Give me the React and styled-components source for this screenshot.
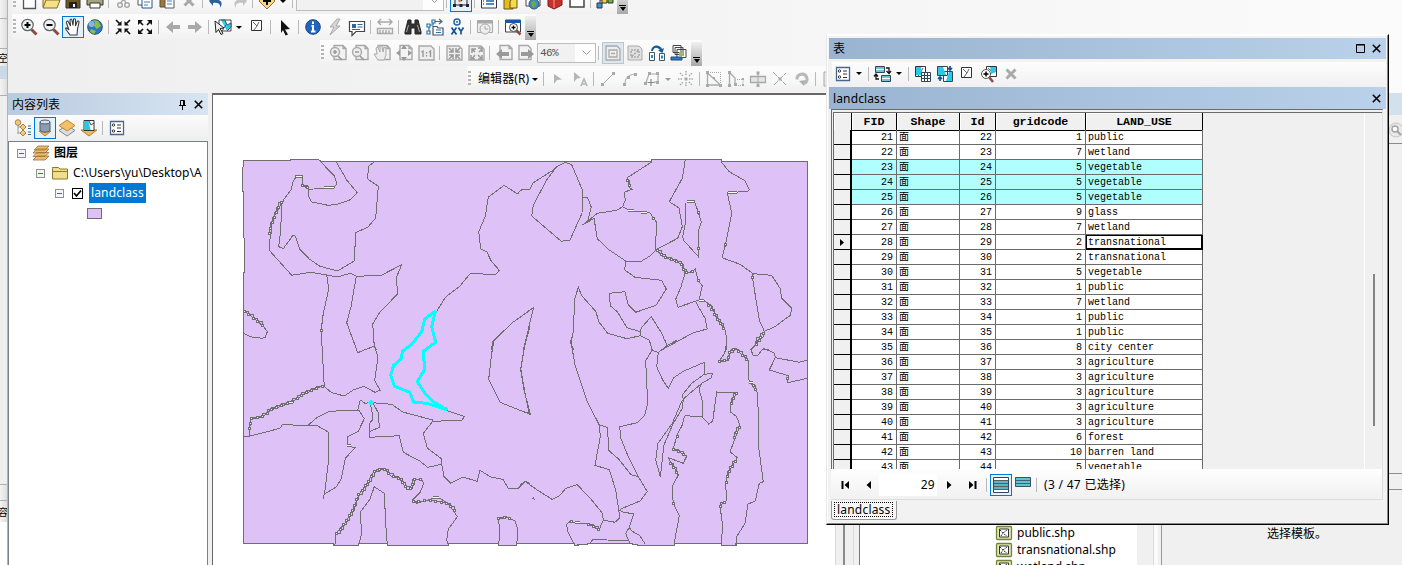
import React from "react";
import styled, { createGlobalStyle, css } from "styled-components";

const UI = `"Noto Sans", "Noto Sans CJK SC", sans-serif`;
const CELL = `"Liberation Mono", "Noto Sans CJK SC", monospace`;

const Global = createGlobalStyle`
  * { box-sizing: border-box; }
  body { margin: 0; background: #f0f0f0; overflow: hidden; }
`;

/* ---------- shell ---------- */
const Desktop = styled.div`
  position: relative;
  display: flex;
  width: 1402px;
  height: 565px;
  overflow: hidden;
  background: #f0f0f0;
  color: #000;
  font: 12px/16px ${UI};
`;
const EdgeStrip = styled.div`
  display: flex;
  flex-direction: column;
  width: 8px;
  flex: none;
  border-right: 1px solid #b4b4b4;
  background: linear-gradient(90deg, #f4f4f4, #dedede);
  overflow: hidden;
`;
const EdgeBlock = styled.div`
  flex: none;
  height: ${(p) => p.$h}px;
  background: ${(p) => p.$bg || "transparent"};
  border-top: ${(p) => (p.$line ? "1px solid #b0b0b0" : "0")};
  font-size: 10px;
  line-height: ${(p) => p.$h}px;
  text-indent: -2px;
  white-space: nowrap;
  overflow: hidden;
`;
const Workspace = styled.div`
  flex: 1;
  min-width: 0;
  display: flex;
  flex-direction: column;
`;
const ToolbarStack = styled.div`
  flex: none;
  height: 93px;
  padding-bottom: 1px;
  overflow: hidden;
  display: flex;
  flex-direction: column;
  justify-content: flex-end;
  background: linear-gradient(90deg, #efefef, #f3f3f3 40%, #fbfbfb);
`;
const Toolbar = styled.div`
  flex: none;
  display: flex;
  align-items: center;
  width: max-content;
  height: 26px;
  margin-left: ${(p) => p.$left}px;
  background: linear-gradient(#fcfcfc, #f8f8f8 55%, #f0f0f0);
`;
const Grip = styled.i`
  width: 3px;
  height: 16px;
  margin: 0 ${(p) => p.$after ?? 2}px 0 1px;
  background: repeating-linear-gradient(#b5b5b5 0 2px, transparent 2px 4px);
`;
const Slot = styled.span`
  flex: none;
  display: flex;
  align-items: center;
  justify-content: center;
  width: 22px;
  height: 22px;
  ${(p) => p.$on && css`border: 1px solid ${p.$soft ? "#bcc5cc" : "#0078d7"}; background: ${p.$soft ? "#dde7f0" : "#e5f0fa"};`}
`;
const Divider = styled.i`
  flex: none;
  width: 1px;
  height: 14px;
  margin: 0 ${(p) => p.$r ?? 3}px 0 ${(p) => p.$l ?? 2}px;
  background: #b9b9b9;
`;
const Caret = styled.i`
  flex: none;
  width: 0;
  border: 3px solid transparent;
  border-top-color: ${(p) => (p.$dim ? "#999" : "#000")};
  border-bottom: 0;
  margin: 0 ${(p) => p.$r ?? 4}px 0 ${(p) => p.$l ?? 2}px;
`;
const Overflow = styled.span`
  align-self: flex-end;
  display: flex;
  flex-direction: column;
  align-items: center;
  justify-content: flex-end;
  gap: 1px;
  width: 11px;
  height: 24px;
  margin-left: 1px;
  padding-bottom: 3px;
  background: linear-gradient(#f0f0f0, #a8a8a8);
  &::before { content: ""; width: 7px; height: 1px; background: #000; }
  &::after { content: ""; border: 3px solid transparent; border-top: 4px solid #000; border-bottom: 0; }
`;
const Combo = styled.span`
  display: flex;
  align-items: center;
  justify-content: space-between;
  width: ${(p) => p.$w}px;
  height: 20px;
  padding: 0 4px 0 2px;
  border: 1px solid #bdbdbd;
  background: linear-gradient(90deg, #f1f1f1 calc(100% - 20px), #fdfdfd 0);
  color: #555;
  font: 11px ${CELL};
  letter-spacing: -0.6px;
`;
const MenuLabel = styled.span`
  width: 54px;
  white-space: nowrap;
  font-size: 12px;
  letter-spacing: 0.1px;
`;

/* ---------- contents panel ---------- */
const Body = styled.div`
  flex: 1;
  min-height: 0;
  display: flex;
`;
const Contents = styled.aside`
  width: 200px;
  flex: none;
  margin-right: 4px;
  display: flex;
  flex-direction: column;
`;
const PanelHead = styled.div`
  flex: none;
  height: 22px;
  display: flex;
  align-items: center;
  padding: 1px 5px 0 4px;
  gap: 8px;
  background: linear-gradient(90deg, #b9cbdf, #d7e4f2);
  font-size: 12px;
`;
const Fill = styled.span`flex: 1;`;
const PanelTools = styled.div`
  flex: none;
  display: flex;
  align-items: center;
  height: 26px;
  padding-left: 4px;
  background: linear-gradient(#fbfbfb, #eee);
`;
const Tree = styled.div`
  flex: 1;
  border: 1px solid #7b7f86;
  border-bottom: 0;
  background: #fff;
  padding-top: 1px;
  overflow: hidden;
`;
const TreeRow = styled.div`
  display: flex;
  align-items: center;
  height: 20px;
  padding-left: ${(p) => p.$indent}px;
  white-space: nowrap;
  font-weight: ${(p) => (p.$strong ? 600 : 400)};
  overflow: hidden;
`;
const Toggle = styled.i`
  flex: none;
  width: 9px;
  height: 9px;
  border: 1px solid #919191;
  background: linear-gradient(#4464a5, #4464a5) center / 5px 1px no-repeat #f4f4f4;
  margin-right: ${(p) => p.$r}px;
`;
const Check = styled.span`
  display: flex;
  width: 11px;
  height: 11px;
  border: 1px solid #000;
  margin-right: 6px;
`;
const Picked = styled.span`
  height: 20px;
  padding: 2px 2px 0;
  background: #0078d7;
  color: #fff;
  letter-spacing: 0.13px;
`;
const Swatch = styled.i`
  width: 15px;
  height: 11px;
  background: #dec1f7;
  border: 1px solid #6e6e6e;
`;

/* ---------- map & docks ---------- */
const MapPane = styled.main`
  flex: none;
  width: 623px;
  border-top: 2px solid #6b6769;
  border-left: 1px solid #6b6769;
  background: #fff;
  svg { display: block; }
`;
const FileDock = styled.div`
  flex: none;
  width: 327px;
  display: flex;
  background: #f0f0f0;
`;
const Rail = styled.i`
  width: ${(p) => p.$w}px;
  background: ${(p) => p.$bg};
`;
const FileList = styled.div`
  flex: none;
  width: 277px;
  background: #fff;
  padding: 431px 0 0 134px;
  overflow: hidden;
`;
const FileRow = styled.div`
  display: flex;
  align-items: center;
  gap: 3px;
  height: 17px;
  font-size: 12px;
`;
const TemplateDock = styled.div`
  flex: 1;
  display: flex;
  flex-direction: column;
`;
const DockHead = styled.div`height: 22px; background: #d3e0ed;`;
const DockSearch = styled.div`
  height: 29px;
  border-bottom: 1px solid #8a8a8a;
  display: flex;
  justify-content: flex-end;
  align-items: center;
  padding-top: 1px;
  svg { margin-right: -4px; }
`;
const DockBody = styled.div`height: 329px;`;
const DockBar = styled.div`
  height: 17px;
  border: 1px solid #8c8c96;
  border-width: 1px 0;
`;
const DockText = styled.div`padding: 36px 0 0 105px;`;

/* ---------- table window ---------- */
const TableWindow = styled.section`
  position: absolute;
  left: 826px;
  top: 34px;
  width: 563px;
  height: 491px;
  display: flex;
  flex-direction: column;
  padding: 3px 2px 0 2px;
  border: 1px solid #fff;
  border-right: 1px solid #000;
  border-bottom: 1px solid #000;
  border-left-color: #e8e8e8;
  background: #f2f2f2;
  box-shadow: inset -1px -1px 0 #8a8a8a, inset 1px 1px 0 #fff;
`;
const TitleBar = styled.div`
  flex: none;
  display: flex;
  align-items: center;
  gap: 7px;
  height: ${(p) => p.$h}px;
  padding: ${(p) => p.$drop || 0}px 5px 0 4px;
  background: linear-gradient(90deg, #99b4d1, #b9d1ea);
  letter-spacing: 0.13px;
`;
const TableTools = styled.div`
  flex: none;
  display: flex;
  align-items: center;
  height: 25px;
  margin: 3px 0 0 3px;
  padding-bottom: 2px;
  background: linear-gradient(#fdfdfd, #f0f0f0);
`;
const Frame = styled.div`
  flex: none;
  display: flex;
  height: 360px;
  margin: 0 3px 0 2px;
  border: 3px double #6b6b6b;
  border-width: 4px 1px 0 3px;
  border-right: 1px solid #e3e3e3;
  background: #f0f0f0;
  overflow: hidden;
`;
const Sheet = styled.div`
  flex: none;
  width: 369px;
  overflow: hidden;
`;
const SheetRow = styled.div`
  display: grid;
  grid-template-columns: 18px 45px 63px 36px 90px 117px;
  height: ${(p) => (p.$head ? 17 : 15)}px;
  background: ${(p) => (p.$sel ? "#afffff" : "#fff")};
`;
const Head = styled.div`
  background: #f0f0f0;
  border: solid #000;
  border-width: 0 1px 1px 0;
  box-shadow: inset 1px 1px #fff;
  text-align: center;
  font: bold 11.6px/17px ${CELL};
`;
const RowHead = styled.div`
  display: flex;
  align-items: center;
  justify-content: center;
  background: #f0f0f0;
  border: solid #000;
  border-width: 0 2px 1px 0;
`;
const Cell = styled.div`
  border: solid #6b6b6b;
  border-width: 0 1px 1px 0;
  padding: 1px ${(p) => (p.$right ? 3 : 2)}px 0;
  text-align: ${(p) => (p.$right ? "right" : "left")};
  font: 10px/14px ${CELL};
  white-space: nowrap;
  overflow: hidden;
  ${(p) => p.$active && css`box-shadow: inset 0 0 0 1px #000; border-color: #000;`}
`;
const ScrollTrack = styled.div`
  width: 18px;
  margin-left: auto;
  padding: 161px 0 0 8px;
  border-left: 1px solid #fff;
`;
const ScrollThumb = styled.div`width: 2px; height: 152px; background: #858585;`;
const Navigator = styled.div`
  flex: none;
  display: flex;
  align-items: center;
  height: 31px;
  margin: 0 3px 0 2px;
  padding: 1px 0 0 4px;
  border-right: 1px solid #ddd;
  border-bottom: 1px solid #ddd;
  background: linear-gradient(#fefefe, #f1f1f1);
`;
const RecordBox = styled.span`
  width: 58px;
  height: 22px;
  margin: 0 2px 0 0;
  padding: 3px 2px 0 0;
  background: #fff;
  text-align: right;
  letter-spacing: 0.3px;
`;
const SelectionNote = styled.span`
  margin-left: 4px;
  letter-spacing: 0.3px;
  white-space: pre;
`;
const SheetTab = styled.div`
  flex: none;
  width: 66px;
  height: 19px;
  margin: 1px 0 0 2px;
  padding: 1px 3px 2px 2px;
  border: 1px solid #999;
  border-top: 0;
  border-radius: 0 0 3px 3px;
  background: #f7f7f7;
  span { display: block; height: 15px; border: 1px dotted #000; line-height: 13px; padding-left: 2px; letter-spacing: 0.2px; }
`;

/* ---------- icons ---------- */
const G = "#a9a9a9";
const page = (c = G, f = "#f3f3f3") => <path d="M6 2.5h9l3 3v11H6z M15 2.5v3h3" fill={f} stroke={c} strokeWidth="1.4" />;
const clip = (x = 3, y = 2) => (
  <g transform={`translate(${x} ${y})`}>
    <path d="M.5.5h10v10H.5z" fill="#fff" stroke="#333" />
    <path d="M2 2l4 4-3 4M6 6l2-4" fill="none" stroke="#666" />
  </g>
);
const art = {
  new: <path d="M4.500 1.500h12v16h-12z" fill="#fdfdff" stroke="#555" strokeWidth="1.300" />,
  open: <path d="M2 17l3-8h14l-3 8zM2 16V5h5l2 2h7v2" fill="#f7e08a" stroke="#806b1c" />,
  save: <g><path d="M3 3h14v14H3z" fill="#6b5a1e" stroke="#333" /><path d="M6 11h8v6H6z" fill="#222" /><path d="M10 13h2v3h-2z" fill="#fff" /></g>,
  print: <g><path d="M2 6h16v8H2z" fill="#a8a480" stroke="#333" /><path d="M5 12h10v5H5z" fill="#fff" stroke="#333" /></g>,
  cut: <g fill="none" stroke={G} strokeWidth="1.500"><circle cx="7" cy="14" r="2.300" /><circle cx="14" cy="14" r="2.300" /><path d="M8 12l5-9M13 12L8 3" /></g>,
  copy: <g><path d="M3 2h9v12H3z" fill="#fff" stroke="#555" /><path d="M7 5h10v12H7z" fill="#fff" stroke="#1d5a8c" /><path d="M9 8h6M9 11h6M9 14h4" stroke="#3f7eb4" /></g>,
  paste: <g><path d="M3 2h11v14H3z" fill="#a5743a" stroke="#553" /><path d="M8 6h9v11H8z" fill="#fff" stroke="#555" /><path d="M10 10h5M10 13h5" stroke="#3f7eb4" /></g>,
  del: <path d="M5.500 5.500l9 9M14.500 5.500l-9 9" stroke={G} strokeWidth="3" />,
  undo: <path d="M2 10l4-5v3c7 0 11 3 7 9 1-4-2-6-7-5v3z" fill="#2c5f9a" />,
  redo: <path d="M18 10l-4-5v3c-7 0-11 3-7 9-1-4 2-6 7-5v3z" fill="#c4c4c4" />,
  add: <g><path d="M10 2l8 8-8 8-8-8z" fill="#f8d684" stroke="#9a7332" /><path d="M10 6v8M6 10h8" stroke="#000" strokeWidth="2" /></g>,
  sketch: <g><path d="M3 14h14M4 14V7l6 3 6-5v9" fill="none" stroke="#222" /><path d="M2 13h3v3H2zM15 13h3v3h-3zM8.500 13h3v3h-3z" fill="#222" /><path d="M8 11l4-7" stroke="#d0803a" strokeWidth="2" /></g>,
  table: <g><path d="M2.500 3h15v14h-15z" fill="#fff" stroke="#334" /><path d="M2 3h16v3H2z" fill="#1f62ac" /><path d="M4 10h1M7 10h8M4 13h1M7 13h8" stroke="#1f62ac" strokeWidth="1.500" /></g>,
  catalog: <g><path d="M3 4h9v14H3z" fill="#e5bc20" stroke="#665510" /><path d="M9 10l7-6v13H9z" fill="#f6da4a" stroke="#665510" /></g>,
  globewin: <g><path d="M3 2h14v13H3z" fill="#fff" stroke="#444" /><circle cx="11" cy="13" r="5" fill="#3e8dc4" stroke="#2c5274" /><path d="M8 11l4-1 1 4-3 3z" fill="#74ac3c" /></g>,
  toolbox: <g><path d="M3 6l8-3 6 3v8l-8 4-6-3z" fill="#c8322a" stroke="#801812" /><path d="M3 7l6 2v8M9 9l8-3" fill="none" stroke="#f19a92" /></g>,
  python: <path d="M3 3h14v13H3z" fill="#fff" stroke="#444" strokeWidth="1.500" />,
  model: <g stroke="#333"><path d="M5 14V9h5" fill="none" /><path d="M2 12h5v5H2z" fill="#3f90d6" /><path d="M7 7h5v5H7z" fill="#f3d04a" /><path d="M13 7h5v5h-5z" fill="#71b344" /></g>,
  zoomin: <g><path d="M12.500 12.500l5 5" stroke="#8e4a42" strokeWidth="3" /><circle cx="8.500" cy="8" r="5.700" fill="#f0f2f2" stroke="#5d6668" strokeWidth="1.200" /><path d="M5.500 8h6M8.500 5v6" stroke="#000" strokeWidth="2" /></g>,
  zoomout: <g><path d="M12.500 12.500l5 5" stroke="#8e4a42" strokeWidth="3" /><circle cx="8.500" cy="8" r="5.700" fill="#f0f2f2" stroke="#5d6668" strokeWidth="1.200" /><path d="M5.500 8h6" stroke="#000" strokeWidth="2" /></g>,
  hand: <path d="M7 18L3 12.500c-1-2 .5-2.500 3 .5L3.500 6C3 4 5 3.500 5.500 5l2 4L7 3.500c0-2 2-2 2 0l1 5 .5-5.500c0-2 2-1.500 2 0v6l1.500-4c.6-1.700 2.400-1 2 .5L14.500 12l-.5 6z" fill="#fff" stroke="#3c3c3c" strokeWidth="1.100" />,
  globe: <g><circle cx="10" cy="10" r="7.300" fill="#2f78bd" stroke="#2c5274" /><path d="M8 3l5 1 3 5-4 3-3-3 1-3z M6 12l5 2-2 3-4-2z" fill="#8cbf45" /><circle cx="6.500" cy="7" r="3" fill="#a9d2ef" opacity=".7" /></g>,
  inward: <g stroke="#111" strokeWidth="1.700" fill="#111"><path d="M3 3l4 4M17 3l-4 4M3 17l4-4M17 17l-4-4" /><path d="M8.500 4v4.500H4zM11.500 4v4.500H16zM8.500 16v-4.500H4zM11.500 16v-4.500H16z" stroke="none" /></g>,
  outward: <g stroke="#111" strokeWidth="1.700"><path d="M5 5l3 3M15 5l-3 3M5 15l3-3M15 15l-3-3" /><path d="M3 3h5L3 8zM17 3v5l-5-5zM3 17v-5l5 5zM17 17h-5l5-5z" fill="#111" stroke="none" /></g>,
  back: <path d="M3 10l7-6v4h7v4h-7v4z" fill={G} />,
  fwd: <path d="M17 10l-7-6v4H3v4h7v4z" fill={G} />,
  select: <g><path d="M6 3h12v11H6z" fill="#fff" stroke="#444" /><path d="M8 3h4l2 5 4-2v4l-4 4M9 14l4-6" fill="#29cbe6" stroke="#456" /><path d="M2 4l9 7-4 .5 3 5-2 1-2.500-5-2.500 3z" fill="#eee" stroke="#222" /></g>,
  clear: clip(4, 3),
  pointer: <path d="M6 3l9 9-5 .5 3 5-2.500 1L8 13l-2 3z" fill="#111" />,
  info: <g><circle cx="10" cy="10" r="7.300" fill="#2265bd" stroke="#174382" /><path d="M10 4.500v2.500M8.500 9H10v5.500M8 14.500h4.500" stroke="#fff" strokeWidth="2" fill="none" /></g>,
  bolt: <path d="M12 2L5 10h4l-4 8 10-9h-4l4-7z" fill="#d5d5d5" stroke="#aaa" />,
  popup: <g><path d="M2.500 4.500h15v10H9l-4 4v-4H2.500z" fill="#fff" stroke="#444" strokeWidth="1.200" /><path d="M5 7h4v4H5z" fill="#2c67a4" /><path d="M10.500 7.500h5M10.500 10h5M5 12.500h8" stroke="#2c67a4" /></g>,
  measure: <g fill="none" stroke={G} strokeWidth="1.400"><path d="M3 5h14M6 2L3 5l3 3M14 2l3 3-3 3M2.500 11.500h15v5h-15z M5 13v3M8 13v3M11 13v3M14 13v3" /></g>,
  find: <g fill="#333" stroke="#222"><path d="M5 3h3v4h4V3h3l3 12v2h-6v-6H8v6H2v-2z" /><path d="M5.500 8l-2 7M14.500 8l2 7" stroke="#aaa" /></g>,
  route: <g fill="none" stroke="#2673ad" strokeWidth="1.200"><path d="M4 15V8h4V4.500h8M14 2l3 2.500L14 7" /><path d="M2 14h3v3H2zM2 7h3v3H2zM7 3h3v3H7z" fill="#fff" /><path d="M8 9.500h4l1 1.500h5v7H8z" fill="#fff" stroke="#456" /><path d="M11 13h5M11 15.500h5" /></g>,
  xy: <g><circle cx="10" cy="5" r="3" fill="#fff" stroke="#2165a4" strokeWidth="1.500" /><circle cx="10" cy="5" r="1" fill="#2165a4" /><path d="M4.500 10.500l5 7M9.500 10.500l-5 7M11.500 10.500l2.500 4 2.500-4M14 14v3.500" stroke="#175590" strokeWidth="1.700" fill="none" /></g>,
  clock: <g stroke={G} fill="#eee"><path d="M2.500 3.500h15v12h-15z" /><path d="M2.500 5h15" strokeWidth="3" /><circle cx="10" cy="12" r="5" /><path d="M10 9v3h3" fill="none" /></g>,
  viewer: <g><path d="M2.500 3h15v12h-15z" fill="#fff" stroke="#345" /><path d="M2 3h16v3H2z" fill="#1859a5" /><path d="M13 13l4.500 4.500" stroke="#8e4a42" strokeWidth="2.500" /><circle cx="10.500" cy="10.500" r="4" fill="#fff" stroke="#444" /><path d="M8.500 10.500h4M10.500 8.500v4" stroke="#000" strokeWidth="1.300" /></g>,
  pzin: <g>{page()}<circle cx="7" cy="9" r="4.500" fill="#eee" stroke={G} strokeWidth="1.400" /><path d="M5 9h4M7 7v4M10 13l4 4" stroke="#999" strokeWidth="1.600" /></g>,
  pzout: <g>{page()}<circle cx="7" cy="9" r="4.500" fill="#eee" stroke={G} strokeWidth="1.400" /><path d="M5 9h4M10 13l4 4" stroke="#999" strokeWidth="1.600" /></g>,
  phand: <g>{page()}<path d="M6 17l-4-6 3 0-1-6 2-1 2 5V3h2l1 6 1-5 2 1v7l-2 5z" fill="#eee" stroke={G} /></g>,
  pfull: <g>{page()}<path d="M10 2l3 4H7zM10 18l3-4H7zM2 10l4-3v6zM18 10l-4-3v6z" fill="#999" /></g>,
  pone: <g><path d="M3 3h12l3 3v11H3z" fill="#eee" stroke={G} strokeWidth="1.400" /><path d="M5.500 9l1.500-1v6M13 9l1.500-1v6M10.500 9v1.500M10.500 12v1.500" fill="none" stroke="#999" strokeWidth="1.400" /></g>,
  pin: <g><path d="M3 3h12l3 3v11H3z" fill="#eee" stroke={G} strokeWidth="1.400" /><path d="M9 9L5 5M9 5v4H5M12 9l4-4M12 5v4h4M9 12l-4 4M5 12h4v4M12 12l4 4M16 12h-4v4" stroke="#999" strokeWidth="1.500" fill="none" /></g>,
  pout: <g><path d="M3 3h12l3 3v11H3z" fill="#eee" stroke={G} strokeWidth="1.400" /><path d="M9 9L6 6M10 6H6v4M13 9l3-3M12 5h4v4M9 12l-3 4M5 12v4h4M12 12l4 4M16 12v4h-4" stroke="#999" strokeWidth="1.500" fill="none" /></g>,
  pback: <g>{page()}<path d="M2 11l6-5v3h7v4H8v3z" fill="#999" /></g>,
  pfwd: <g><path d="M3 2.500h9l3 3v11H3z" fill="#f3f3f3" stroke={G} strokeWidth="1.400" /><path d="M18 11l-6-5v3H5v4h7v3z" fill="#999" /></g>,
  draft: <g fill="#eee" stroke={G} strokeWidth="1.300"><path d="M3 3h11l3 3v11H3z" /><path d="M6 7h8v7H6zM8 10.500h4" /></g>,
  focus: <g fill="#e2e2e2" stroke={G}><path d="M3 3h11l3 3v11H3z" /><path d="M6 7h8v7H6zM7 13l6-5" strokeDasharray="2 1" strokeWidth="1.500" /></g>,
  swap: <g><path d="M4 8C5 1 13 1 15 6l2-1-1.500 5L11 7.500l2-.5C10 4 7 4 6 8z" fill="#145b95" /><path d="M2.500 9.500h5v8h-5zM12.500 10.500h5v7h-5z" fill="#fff" stroke="#456" /><path d="M4 12h2v3H4zM14 12.500h2v3h-2z" fill="#168acb" /></g>,
  pages: <g><path d="M4 2.500h8v7H4z M6 4.500h8v7H6z M8 6.500h9v8H8z" fill="#fff" stroke="#444" /><path d="M10 9h5v4h-5z" fill="#9bbd56" /><path d="M2 14h11v3H2z" fill="#3379b5" stroke="#184c80" /></g>,
  tip: <path d="M6 5l8 5.500-5 .5-3 4z" fill="#b5b5b5" />,
  tipA: <g><path d="M4 3l7 6-4 .5L4 13z" fill="#b5b5b5" /><path d="M11 17l3-7 3 7M12 15h4" stroke="#b5b5b5" strokeWidth="1.600" fill="none" /></g>,
  seg: <g fill={G}><path d="M5 15L15 5" stroke={G} /><path d="M3 14h3v3H3zM14 3h3v3h-3z" /></g>,
  arc: <g fill={G}><path d="M5 15c0-6 3-9 10-10" stroke={G} fill="none" /><path d="M3 14h3v3H3zM7 7h3v3H7zM14 4h3v3h-3z" /></g>,
  trace: <g fill="none" stroke={G} strokeWidth="1.200"><path d="M3.500 15L7 5h9v8h-4" /><path d="M6 3h3v3H6zM14 3h3v3h-3zM14 12h3v3h-3zM2 13h3v3H2z" fill={G} stroke="none" /><path d="M9 10v7M5.500 13.500h7" stroke="#888" /></g>,
  burst: <g stroke={G} strokeWidth="1.500"><path d="M10 2v5M10 13v5M2 10h5M13 10h5M4 4l3 3M13 13l3 3M4 16l3-3M13 7l3-3" strokeDasharray="1.500 1" /><path d="M8.500 8.500h3v3h-3z" fill={G} stroke="none" /></g>,
  verts: <g fill="none" stroke={G}><path d="M3.500 4v12h13L3.500 4" strokeWidth="1.300" /><path d="M4 3.500h12.500V16" strokeDasharray="1 1" /><path d="M2 2h3v3H2zM2 15h3v3H2zM15 15h3v3h-3zM9 8h2v2H9z" fill={G} stroke="none" /></g>,
  reshape: <g fill="none" stroke={G}><path d="M3.500 4v12M9 15V9L4 4" strokeWidth="1.300" /><path d="M11 10.500h6v6h-6" strokeDasharray="1 1" /><path d="M2 2h3v3H2zM2 15h3v3H2zM8 14h3v3H8zM16 9h2v2h-2zM16 15h2v2h-2z" fill={G} stroke="none" /></g>,
  split: <g stroke={G}><path d="M2.500 7.500h15v6h-15z" fill="#e5e5e5" strokeWidth="1.300" /><path d="M10 3v14" /><path d="M8.500 2.500h3v3h-3zM8.500 15h3v3h-3z" fill={G} stroke="none" /></g>,
  inter: <g stroke={G}><path d="M4 16L16 4M3 3l13 13" strokeDasharray="6 1" /><path d="M8.500 8.500h3v3h-3z" fill={G} stroke="none" /></g>,
  rotate: <g><path d="M5 10.500a5 5 0 1 1 7.500 4" stroke="#b8b8b8" strokeWidth="3" fill="none" /><path d="M7 12l7-1-2 6z" fill="#b0b0b0" /></g>,
  attr: <g><path d="M4 3h12v14H4z" fill="#e8e8e8" stroke={G} /><path d="M6 6h8M6 9h8M6 12h8" stroke={G} /></g>,
  listSource: <g stroke="#a8834a"><path d="M5 6v10M5 9h5M5 15h5" stroke="#999" fill="none" /><circle cx="5" cy="4.500" r="2.800" fill="#f4c877" /><path d="M10 6l3 3-3 3-3-3zM10 12l3 3-3 3-3-3z" fill="#f4c877" /><path d="M15 8h3M15 10.500h3M15 14h3M15 16.500h3" stroke="#2d7296" /></g>,
  cylinder: <g><path d="M4 13h12l-6 5z" fill="#edbd60" stroke="#b08030" /><path d="M5 4v8c1 3 9 3 10 0V4z" fill="#8c9db1" stroke="#4c5a6a" /><ellipse cx="10" cy="4" rx="5" ry="2" fill="#d9e2ec" stroke="#4c5a6a" /></g>,
  layers2: <g><path d="M10 7l8 5.500-8 5.500-8-5.500z" fill="#ddd" stroke="#888" /><path d="M10 2l8 5.500-8 5.500-8-5.500z" fill="#f4bf67" stroke="#b28842" /></g>,
  selList: <g><path d="M2 12h16l-8 6z" fill="#edb85e" stroke="#b08030" /><path d="M5 2.500h10v10H5z" fill="#fff" stroke="#333" /><path d="M5.500 3h4l2 9h-6z" fill="#24c9e6" /><path d="M10 3l2 4 3-2" stroke="#444" fill="none" /></g>,
  options: <g><path d="M3.500 3.500h13v13h-13z" fill="#fff" stroke="#4d6688" strokeWidth="1.300" /><path d="M10 7h4M10 10h4M10 13.500h4" stroke="#333" /><circle cx="6.500" cy="7" r="1.200" fill="none" stroke="#333" /><circle cx="6.500" cy="13" r="1.200" fill="none" stroke="#333" /></g>,
  stack: <g fill="#edbd6e" stroke="#9b7138" strokeWidth=".8"><path d="M2 17l4-4h12l-4 4zM2 13.500l4-4h12l-4 4zM2 10l4-4h12l-4 4zM3 7l4-4h11l-4 4z" /></g>,
  folder: <g fill="#efdf8b" stroke="#8d7a2a"><path d="M2.500 5.500V4.500h6l1.500 1.500h7.500v10h-15z" /><path d="M2.500 8.500h15" /></g>,
  related: <g><path d="M2.500 2.500h9v6h-9zM8.500 11.500h9v6h-9z" fill="#6cc5d4" stroke="#345" /><path d="M3 5.500h8M9 14.500h8" stroke="#fff" /><path d="M13 4h3v5M13.500 7l2.500 2.500L18 7M6 15H3v-4M1 12.500L3 10l2 2.500" fill="none" stroke="#111" strokeWidth="1.300" /></g>,
  selAttr: <g>{clip(2, 2)}<path d="M3 3h5l1 8H3z" fill="#27cbe7" /><path d="M8.500 8.500h9v9h-9z" fill="#fff" stroke="#345" /><path d="M8.500 11.500h9M8.500 14.500h9M11.500 9v8M14.500 9v8" stroke="#345" /></g>,
  switchSel: <g><path d="M2.500 2.500h10v9h-10zM8.500 7.500h9v10h-9z" fill="#fff" stroke="#345" /><path d="M3 3h5l3 8H3zM14 8h3v9h-6z" fill="#27cbe7" /><path d="M15 2v4M13 4l2 2 2-2M5 17v-4M3 15l2-2 2 2" stroke="#144e91" strokeWidth="1.700" fill="none" /></g>,
  zoomSel: <g>{clip(7, 2)}<path d="M11 3h6v5l-5 2z" fill="#27cbe7" /><path d="M10 13l4 5" stroke="#8e4a42" strokeWidth="2.500" /><circle cx="7" cy="10" r="4.500" fill="#fff" stroke="#555" /><path d="M4.500 10h5M7 7.500v5" stroke="#000" strokeWidth="1.500" /></g>,
  allRecords: <g><path d="M2.500 2.500h15v15h-15z" fill="#fff" stroke="#346" /><path d="M3 7h14M3 10h14M3 13h14" stroke="#53b8c8" strokeWidth="2" /><path d="M3 5.500h14M3 8.500h14M3 11.500h14M3 14.500h14" stroke="#333" strokeWidth=".8" /></g>,
  selRecords: <g><path d="M2.500 2.500h15v9h-15z" fill="#63c2d0" stroke="#356" /><path d="M3 5.500h14M3 8.500h14" stroke="#367" /></g>,
  shp: <g><rect x="2.500" y="3.500" width="15" height="13" rx="1" fill="#dce7ad" stroke="#74843c" strokeWidth="1.300" /><path d="M5.500 6h9v8h-9z" fill="#fff" stroke="#333" /><path d="M6 7l3 3-2 3M9 10l4-3M10 11l3 2" fill="none" stroke="#333" strokeDasharray="2 1" /></g>,
  magnify: <g><circle cx="10" cy="10" r="7" fill="#e9e9e9" stroke="#c6c6c6" /><circle cx="9" cy="9" r="3" fill="#fff" stroke="#a5a5a5" strokeWidth="1.500" /><path d="M11 11l4 4" stroke="#a5a5a5" strokeWidth="2" /></g>,
};
const Icon = ({ n }) => <svg width="20" height="20" viewBox="0 0 20 20">{art[n]}</svg>;
const Chevron = () => <svg width="9" height="6" viewBox="0 0 9 6"><path d="M.5.5l4 4 4-4" fill="none" stroke="#999" /></svg>;
const Close = () => <svg width="9" height="9" viewBox="0 0 9 9"><path d="M.8.8l7.400 7.400M8.200.8L.8 8.200" stroke="#000" strokeWidth="1.600" /></svg>;
const Pin = () => <svg width="7" height="10" viewBox="0 0 7 10"><path d="M1.500 5V.5h4V5M0 5.500h7M3.500 5.500V10M4.500 1v4" fill="none" stroke="#000" /></svg>;
const Maximize = () => <svg width="9" height="9" viewBox="0 0 9 9"><path d="M.5.5h8v8h-8zM0 1h9" fill="none" stroke="#000" /></svg>;

/* "|" divider, "v" caret, "w" dim caret, "*name" pressed, "~name" softly pressed */
const Tools = ({ items }) =>
  items.split(" ").map((t, i) => {
    if (t === "|") return <Divider key={i} />;
    if (t === "v") return <Caret key={i} />;
    if (t === "w") return <Caret key={i} $dim />;
    const soft = t[0] === "~";
    const on = soft || t[0] === "*";
    return <Slot key={i} $on={on} $soft={soft}><Icon n={on ? t.slice(1) : t} /></Slot>;
  });

/* ---------- map drawing ---------- */
const tiles = [
  { at: [240, 150], lines: [
    "236,29 283,78 291,100 282,113 207,118 189,106 187,77 167,77 166,84 157,99 155,117 132,148 107,190 95,224 92,265 87,272 87,300 155,376 210,367 262,375 291,381 332,370 349,379 424,376 485,344 470,380 472,433 420,486 398,522 403,588 410,600",
    "289,36 320,90 352,128 331,149 292,163 264,166 215,156 207,141 205,118",
    "403,36 387,47 382,86 415,109 407,204 384,231 347,248 343,333 292,363 240,349 208,327 179,298 166,258 158,257 130,296 116,290 122,240 125,165 132,148",
    "260,375 266,418 250,490 243,545 247,600", "349,379 333,470 320,518 350,600", "374,600 403,588",
    "870,118 842,120 833,132 792,106 745,142 736,199 716,245 722,296 740,305 754,333 778,361 767,373 690,371 660,408 617,441 591,482",
    "13,482 45,508 72,531 82,545 76,562 66,565 30,560 12,550",
    "870,481 817,518 757,576 755,600", "870,530 860,565 851,600"],
    jags: ["13,485 45,508 72,531", "125,158 107,190 95,224 87,268", "187,105 203,113", "243,540 244,548"],
    slots: ["167,79 187,79", "252,112 282,112"] },
  { at: [240, 340], lines: [
    "245,0 253,140 275,158 313,168 340,150 372,139 405,157 421,151 404,122 414,50 403,18 401,0", "340,0 353,38 403,18",
    "246,139 197,160 155,187 120,200 92,210 70,230 32,237 27,290 10,290",
    "23,290 120,265 127,254 232,257 265,276 267,350 255,450 250,478", "252,463 290,440 304,415 316,355 345,323 322,317 322,290 355,274 373,236 356,210 268,214 232,232 205,255",
    "353,210 361,180 375,190 390,188 397,220 397,240 389,250 390,292 478,287 490,337 538,362 563,382 605,373 603,355 562,324 550,280 578,244 578,240 488,216 455,193 398,188 415,218 418,262 388,275",
    "578,244 666,241 673,229 615,210",
    "603,355 605,373 612,410 632,430 668,411 712,424 720,391 752,411 789,418 805,445 834,445 857,424 870,431",
    "281,616 287,610 287,580 315,550 340,505 357,463 380,432 400,397 415,386 434,387 453,408 480,417 500,447 515,447 519,417 545,417 551,430 540,458 518,480 530,490 565,480 590,470 625,490 652,530 625,568 620,600 625,616",
    "356,614 364,585 362,515 390,478 403,440 433,460 437,550 442,616",
    "775,616 779,590 776,535 800,530 825,543 834,570 830,616",
    "762,0 755,40 746,118 780,187 868,222 855,160 842,85 857,0"],
    jags: ["246,139 197,160 155,187 120,200 92,210 70,230 32,237 27,275", "290,580 315,550 340,505 357,463 380,432 400,397 415,388 434,388 453,408 480,417 500,445 515,445 519,420 545,418", "520,484 565,482 625,490 645,515", "776,535 800,531 822,541"],
    slots: ["322,316 334,316", "580,471 598,471", "146,187 158,187"] },
  { at: [520, 150], lines: [
    "135,37 155,44 187,120 186,190 150,270 124,274 35,198 40,165 80,90 108,52 135,37", "0,121 30,117 40,98 108,55",
    "188,143 203,144 214,172 204,210 188,225", "193,222 222,205 232,266 268,300 317,333 365,333 390,318 410,298 406,298 410,218 390,188 330,182 308,170 290,181 232,190 193,222",
    "395,36 322,83 328,112 336,118 312,127 316,150 308,170", "496,29 487,85 448,155 477,174 487,230 473,265 410,298",
    "497,158 497,215 488,260 490,270 536,321 535,245 544,215 535,187 523,152 500,153",
    "604,36 628,65 675,92 688,118 684,124 622,128 635,190 617,282 606,323 660,343 700,371 755,376 780,415 785,445 815,475 811,496 765,530 733,544 718,510 697,380 700,371",
    "410,300 430,320 460,332 485,343 495,368 515,365 526,357 535,392 547,408 537,450 552,452 575,467 590,505 617,542 621,600",
    "495,370 483,410 467,448 474,472 537,450", "528,457 555,505 562,537 520,548 425,600",
    "317,333 314,360 345,382 425,391 439,417 408,466 347,487 325,465 315,425 268,430 271,467 292,485 321,533 361,545 364,533 394,500 425,550 441,587",
    "361,545 361,557 321,566 263,550 236,515 228,485 185,437 175,412 164,447 160,545 152,580 161,600", "361,557 388,570 397,600",
    "733,544 730,560 705,585 692,600", "632,600 652,594", "728,600 746,598", "0,502 41,472 10,600"],
    jags: ["412,302 430,320 460,332 485,343 495,368 515,365 526,360", "565,465 590,505 617,545", "730,550 705,585", "400,206 406,214", "322,90 334,118", "535,187 536,192", "535,295 536,300", "617,282 616,288", "697,382 698,388", "535,390 536,396"],
    slots: ["325,181 343,181", "362,187 382,187", "500,154 523,154", "625,127 652,127", "538,451 552,451"] },
  { at: [520, 340], lines: [
    "0,211 31,222 12,150 2,90 17,0", "0,436 15,424 52,450 96,478 119,467 137,445 172,434 215,480 246,518 250,540",
    "152,0 165,75 202,185 238,255 241,290 225,376 268,389 287,450 297,515 298,535 285,547 250,540 237,570 205,552 150,545 140,553 143,575 163,613",
    "238,255 262,262 267,332 295,356 333,404 355,410 382,455 360,483 300,508", "355,410 325,350 303,296 299,260 352,248 374,225 383,190 377,62 396,30 388,0",
    "436,0 440,17 472,0", "396,30 415,38 440,17", "415,38 410,80 428,120 445,145 461,113 490,94 553,67 553,103 577,100 575,113 545,130 490,177 487,165 515,130 553,103",
    "545,130 537,147 549,190 547,230", "487,180 457,250 414,310 407,360 421,410 432,315 460,250 487,205 490,177",
    "621,0 614,40 597,64 623,60 630,32 648,27 685,62 687,120 713,160 717,330 730,425 718,430 706,483 684,492 675,550 650,590 647,616",
    "494,227 545,230 566,252 578,243 590,156 650,158 632,192 633,217 650,230 660,258 630,335 652,353 627,395 616,430 621,480 600,497 607,550 605,616",
    "494,227 487,255 471,285 460,327 500,348 490,370 445,353 475,405 456,440 460,490 478,528 466,590 463,616",
    "718,0 693,30 700,47 713,47 730,25 762,38 767,53 838,67 862,60", "765,55 748,90 805,107 803,128 862,115",
    "295,508 305,515 341,522 328,562 317,580 325,600 331,611", "325,603 218,598 210,611 180,614 163,616", "328,562 335,573 360,587 375,612", "37,478 40,474 44,481"],
    jags: ["597,64 623,60 630,32 648,27 685,62", "700,135 713,160", "650,160 632,192", "658,262 642,295", "645,365 627,395 617,433", "613,487 602,500", "460,327 500,348", "450,370 475,405", "471,288 472,293", "460,490 461,496", "205,552 237,568 240,555", "718,0 705,18", "802,115 804,125", "155,545 148,548"],
    slots: ["165,547 179,547", "688,127 700,127"] },
];
const parse = (s) => s.split(" ").map((p) => p.split(",").map(Number));
const abs = ([ox, oy], s) => parse(s).map(([x, y]) => [ox + x / 3, oy + y / 3]);
const d = (pts) => "M" + pts.map((p) => p.map((v) => Math.round(v * 10) / 10).join(" ")).join("L");
const snap = (v) => Math.floor(v) + 0.5;
/* raster-edge look: square corners joined by right-angled steps */
const stairs = (pts) => {
  let line = "";
  let squares = "";
  let carry = 0;
  let lastY = null;
  for (let i = 1; i < pts.length; i++) {
    const [x0, y0] = pts[i - 1];
    const dx = pts[i][0] - x0;
    const dy = pts[i][1] - y0;
    const len = Math.hypot(dx, dy);
    for (; carry < len; carry += 5.6) {
      const x = snap(x0 + (dx * carry) / len);
      const y = snap(y0 + (dy * carry) / len);
      line += lastY === null ? `M${x} ${y}` : `H${x}V${y}`;
      squares += `M${x - 1} ${y - 1}h2v2h-2z`;
      lastY = y;
    }
    carry -= len;
  }
  return { line, squares };
};
const EXTENT = "M244 160.500L290 160.500V159.500H318.500L321 161.500H651.500V159.500H721.500V161.500H807.500V543.500H736V545.500H721.500V543.500H674.500V545.500H640L630 543.500H592L575 545.500L574 543.500H516.500V545.500H498.500V543.500H448.500V545.500H387.500V543.500H358.500V545.500H333.500V543.500H243.500V275L244.500 270V240L243.500 235V193L242.500 190V170Z";
const FIGURE_A = "435.500,311 424.700,319 421.700,331.700 411.700,344.300 402.700,351 401,359 393.700,365.300 390.700,375.300 394.300,386 409.700,392.300 413.700,402.300 426.700,403.300 445,409.300";
const FIGURE_B = "435.500,311 431.700,326.700 435.700,342.300 423.700,351 424.300,370 417.300,381.700 425,393.300 433.700,402 442,406.700 445,409.300";
const MapView = () => (
  <svg width="622" height="470" viewBox="213 95 622 470" shapeRendering="crispEdges" fill="none">
    <path d={EXTENT} fill="#dec1f7" stroke="#6e6e6e" />
    <g stroke="#6e6e6e">{tiles.map((t) => t.lines.map((l) => <path key={l} d={d(abs(t.at, l))} />))}</g>
    {tiles.map((t) => t.jags.map((l) => {
      const s = stairs(abs(t.at, l));
      return (
        <g key={l} stroke="#6e6e6e">
          <path d={s.line} />
          <path d={s.squares} fill="#f3ebfb" />
        </g>
      );
    }))}
    {tiles.map((t) => t.slots.map((l) => (
      <g key={l}>
        <path d={d(abs(t.at, l))} stroke="#6e6e6e" strokeWidth="3" />
        <path d={d(abs(t.at, l))} stroke="#fff" />
      </g>
    )))}
    <g stroke="#0ff" strokeWidth="3" strokeLinejoin="round">
      <polyline points={FIGURE_A} />
      <polyline points={FIGURE_B} />
    </g>
    <path d="M370.500 399.500l3 3-3 3-3-3zM446 406.500l2.500 2.500-2.500 2.500-2.500-2.500z" fill="#0ff" />
  </svg>
);

/* ---------- data ---------- */
const records = [
  [21, 1, "public"], [22, 7, "wetland"], [23, 5, "vegetable"], [24, 5, "vegetable"], [25, 5, "vegetable"],
  [26, 9, "glass"], [27, 7, "wetland"], [28, 2, "transnational"], [29, 2, "transnational"], [30, 5, "vegetable"],
  [31, 1, "public"], [32, 7, "wetland"], [33, 1, "public"], [34, 1, "public"], [35, 8, "city center"],
  [36, 3, "agriculture"], [37, 3, "agriculture"], [38, 3, "agriculture"], [39, 3, "agriculture"], [40, 3, "agriculture"],
  [41, 6, "forest"], [42, 10, "barren land"], [43, 5, "vegetable"],
];
const selected = new Set([23, 24, 25]);
const Arrow = ({ flip, bar }) => (
  <Slot>
    <svg width="10" height="8" viewBox="0 0 10 8">
      <g transform={flip ? "translate(10 0) scale(-1 1)" : undefined}>
        <path d="M2 0l4.500 4L2 8z" />{bar && <path d="M7.500 0h2v8h-2z" />}
      </g>
    </svg>
  </Slot>
);

export default function App() {
  return (
    <Desktop>
      <Global />
      <EdgeStrip>
        <EdgeBlock $h={18} /><EdgeBlock $h={30} $line /><EdgeBlock $h={18} $line>空</EdgeBlock>
        <EdgeBlock $h={13} $bg="#cbd8e6" /><EdgeBlock $h={16} /><EdgeBlock $h={389} $line $bg="#efefef" />
        <EdgeBlock $h={16} $line /><EdgeBlock $h={22} $line>容</EdgeBlock><EdgeBlock $h={43} $bg="#fff" />
      </EdgeStrip>
      <Workspace>
        <ToolbarStack>
          <Toolbar $left={4}>
            <Grip $after={2} />
            <Tools items="new open save print | cut copy paste del | undo redo | add v |" />
            <Combo $w={148}><span /><Chevron /></Combo>
            <Divider />
            <Tools items="*sketch | table catalog globewin toolbox python | model" />
            <Overflow />
          </Toolbar>
          <Toolbar $left={4}>
            <Grip />
            <Tools items="zoomin zoomout *hand globe | inward outward | back fwd | select v clear | pointer | info bolt popup | measure | find route xy | clock | viewer" />
            <Overflow />
          </Toolbar>
          <Toolbar $left={312}>
            <Grip $after={3} />
            <Tools items="pzin pzout phand pfull pone | pin pout | pback pfwd" />
            <Combo $w={59}>46%<Chevron /></Combo>
            <Divider />
            <Tools items="~draft focus swap pages" />
            <Overflow />
          </Toolbar>
          <Toolbar $left={459}>
            <Grip $after={7} />
            <MenuLabel>编辑器(R)</MenuLabel>
            <Caret $l={0} $r={3} />
            <Tools items="| tip tipA | seg arc trace w burst | verts reshape split inter rotate | attr" />
          </Toolbar>
        </ToolbarStack>
        <Body>
          <Contents>
            <PanelHead>内容列表<Fill /><Pin /><Close /></PanelHead>
            <PanelTools><Tools items="listSource *cylinder layers2 selList | options" /></PanelTools>
            <Tree>
              <TreeRow $indent={8} $strong><Toggle $r={5} /><Icon n="stack" />&nbsp;图层</TreeRow>
              <TreeRow $indent={27}><Toggle $r={5} /><Icon n="folder" />&nbsp;C:\Users\yu\Desktop\A</TreeRow>
              <TreeRow $indent={46}><Toggle $r={8} /><Check><svg width="9" height="9" viewBox="0 0 9 9"><path d="M1 4l2.500 3L8 1.500" fill="none" stroke="#000" strokeWidth="1.700" /></svg></Check><Picked>landclass</Picked></TreeRow>
              <TreeRow $indent={78}><Swatch /></TreeRow>
            </Tree>
          </Contents>
          <MapPane><MapView /></MapPane>
          <FileDock>
            <Rail $w={1} $bg="#dadada" /><Rail $w={7} $bg="#f0f0f0" /><Rail $w={2} $bg="#8b8b8b" /><Rail $w={8} $bg="#f0f0f0" />
            <Rail $w={1} $bg="#dcdcdc" /><Rail $w={5} $bg="#f0f0f0" /><Rail $w={1} $bg="#777" />
            <FileList>
              {["public.shp", "transnational.shp", "wetland.shp"].map((f) => <FileRow key={f}><Icon n="shp" />{f}</FileRow>)}
            </FileList>
            <Rail $w={16} $bg="#f0f0f0" /><Rail $w={1} $bg="#dcdcdc" /><Rail $w={4} $bg="#fafafa" /><Rail $w={3} $bg="#f0f0f0" /><Rail $w={1} $bg="#999" />
          </FileDock>
          <TemplateDock>
            <DockHead />
            <DockSearch><Icon n="magnify" /></DockSearch>
            <DockBody />
            <DockBar />
            <DockText>选择模板。</DockText>
          </TemplateDock>
        </Body>
      </Workspace>

      <TableWindow>
        <TitleBar $h={21}>表<Fill /><Maximize /><Close /></TitleBar>
        <TableTools><Tools items="options v | related v | selAttr switchSel clear zoomSel del" /></TableTools>
        <TitleBar $h={22} $drop={1}>landclass<Fill /><Close /></TitleBar>
        <Frame>
          <Sheet>
            <SheetRow $head>
              <Head />{["FID", "Shape", "Id", "gridcode", "LAND_USE"].map((h) => <Head key={h}>{h}</Head>)}
            </SheetRow>
            {records.map(([fid, code, use]) => (
              <SheetRow key={fid} $sel={selected.has(fid)}>
                <RowHead>{fid === 28 && <svg width="4" height="7" viewBox="0 0 4 7"><path d="M0 0l4 3.500L0 7z" /></svg>}</RowHead>
                <Cell $right>{fid}</Cell><Cell>面</Cell><Cell $right>{fid + 1}</Cell><Cell $right>{code}</Cell>
                <Cell $active={fid === 28}>{use}</Cell>
              </SheetRow>
            ))}
          </Sheet>
          <ScrollTrack><ScrollThumb /></ScrollTrack>
        </Frame>
        <Navigator>
          <Arrow flip bar /><Arrow flip />
          <RecordBox>29</RecordBox>
          <Arrow /><Arrow bar />
          <Divider $l={3} $r={3} />
          <Tools items="*allRecords selRecords |" />
          <SelectionNote>(3 / 47 已选择)</SelectionNote>
        </Navigator>
        <SheetTab><span>landclass</span></SheetTab>
      </TableWindow>
    </Desktop>
  );
}
